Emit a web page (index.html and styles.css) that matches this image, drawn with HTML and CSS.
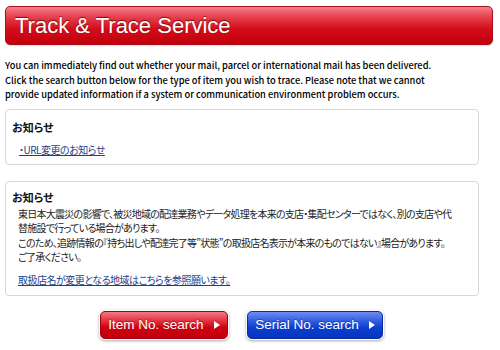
FILE: index.html
```html
<!DOCTYPE html>
<html lang="ja">
<head>
<meta charset="utf-8">
<link rel="stylesheet" href="styles.css">
</head>
<body>
<div class="page">
  <h1 class="title">Track &amp; Trace Service</h1>
  <p class="intro">You can immediately find out whether your mail, parcel or international mail has been delivered.<br>Click the search button below for the type of item you wish to trace. Please note that we cannot<br>provide updated information if a system or communication environment problem occurs.</p>
  <div class="notice notice-short">
    <h2 class="notice-title">お知らせ</h2>
    <a class="notice-link indent" href="#">・URL変更のお知らせ</a>
  </div>
  <div class="notice notice-long">
    <h2 class="notice-title">お知らせ</h2>
    <p class="notice-body">東日本大震災の影響で、被災地域の配達業務やデータ処理を本来の支店・集配センターではなく、別の支店や代<br>替施設で行っている場合があります。<br>このため、追跡情報の『持ち出しや配達完了等”状態”の取扱店名表示が本来のものではない』場合があります。<br>ご了承ください。</p>
    <a class="notice-link body-link" href="#">取扱店名が変更となる地域はこちらを参照願います。</a>
  </div>
  <div class="buttons">
    <a class="btn btn-red" href="#">Item No. search <span class="arrow"></span></a>
    <a class="btn btn-blue" href="#">Serial No. search <span class="arrow"></span></a>
  </div>
</div>
</body>
</html>
```
FILE: styles.css
```css
html, body {
  margin: 0;
  padding: 0;
  background: #ffffff;
}
.page {
  width: 500px;
  height: 350px;
  padding: 6px 7px 0 5px;
  box-sizing: border-box;
  overflow: hidden;
}
.title {
  margin: 0;
  height: 39px;
  box-sizing: border-box;
  border: 1px solid #a8101c;
  border-radius: 5px;
  background: linear-gradient(#f4808a 0%, #e43a48 30%, #d20c1a 60%, #c4000c 100%);
  color: #ffffff;
  font-family: "Liberation Sans", Arial, sans-serif;
  font-weight: normal;
  font-size: 22px;
  line-height: 37px;
  padding-left: 9px;
  text-shadow: 0 -1px 1px rgba(90, 0, 0, 0.8);
  box-shadow: 0 1px 1px rgba(0,0,0,0.15);
}
.intro {
  margin: 13px 0 0 0;
  font-family: "Noto Sans CJK JP", sans-serif;
  font-weight: 500;
  font-size: 9.3px;
  line-height: 14.5px;
  color: #000;
  white-space: nowrap;
}
.notice {
  width: 474px;
  box-sizing: border-box;
  border: 1px solid #d8d8d8;
  border-radius: 4px;
  font-family: "Noto Sans CJK JP", sans-serif;
  font-feature-settings: "palt";
  color: #222;
}
.notice-short {
  margin-top: 7px;
  height: 56px;
  padding: 9px 0 0 6px;
}
.notice-long {
  margin-top: 16px;
  height: 115px;
  padding: 7px 0 0 6px;
}
.notice-title {
  margin: 0;
  font-size: 11px;
  line-height: 16px;
  font-weight: bold;
  color: #111;
}
.notice-link {
  display: inline-block;
  font-size: 10px;
  letter-spacing: -0.5px;
  line-height: 14px;
  color: #1e3f8c;
  text-decoration: underline;
}
.indent {
  margin: 6px 0 0 7px;
}
.notice-body {
  margin: 2px 0 0 6px;
  font-size: 10px;
  letter-spacing: -0.75px;
  line-height: 14.6px;
  white-space: nowrap;
}
.body-link {
  margin: 0 0 0 6px;
}
.buttons {
  display: flex;
  gap: 19px;
  margin: 15px 0 0 95px;
}
.btn {
  display: flex;
  align-items: center;
  justify-content: center;
  gap: 10px;
  height: 28px;
  box-sizing: border-box;
  border-radius: 5px;
  color: #fff;
  text-decoration: none;
  font-family: "Liberation Sans", Arial, sans-serif;
  font-size: 13.5px;
  box-shadow: 0 0 0 1px #ffffff, 0 1px 3px 1px rgba(0,0,0,0.35);
  text-shadow: 0 -1px 0 rgba(0,0,0,0.3);
}
.btn-red {
  width: 128px;
  border: 1px solid #a00010;
  background: linear-gradient(#f27a82 0%, #e2303c 35%, #cf0010 60%, #c2000a 100%);
}
.btn-blue {
  width: 136px;
  border: 1px solid #0a2c9c;
  background: linear-gradient(#6f8cf0 0%, #2f5de0 35%, #0c3fd0 60%, #0535c0 100%);
}
.arrow {
  width: 0;
  height: 0;
  border-top: 4px solid transparent;
  border-bottom: 4px solid transparent;
  border-left: 6px solid #fff;
}
```
